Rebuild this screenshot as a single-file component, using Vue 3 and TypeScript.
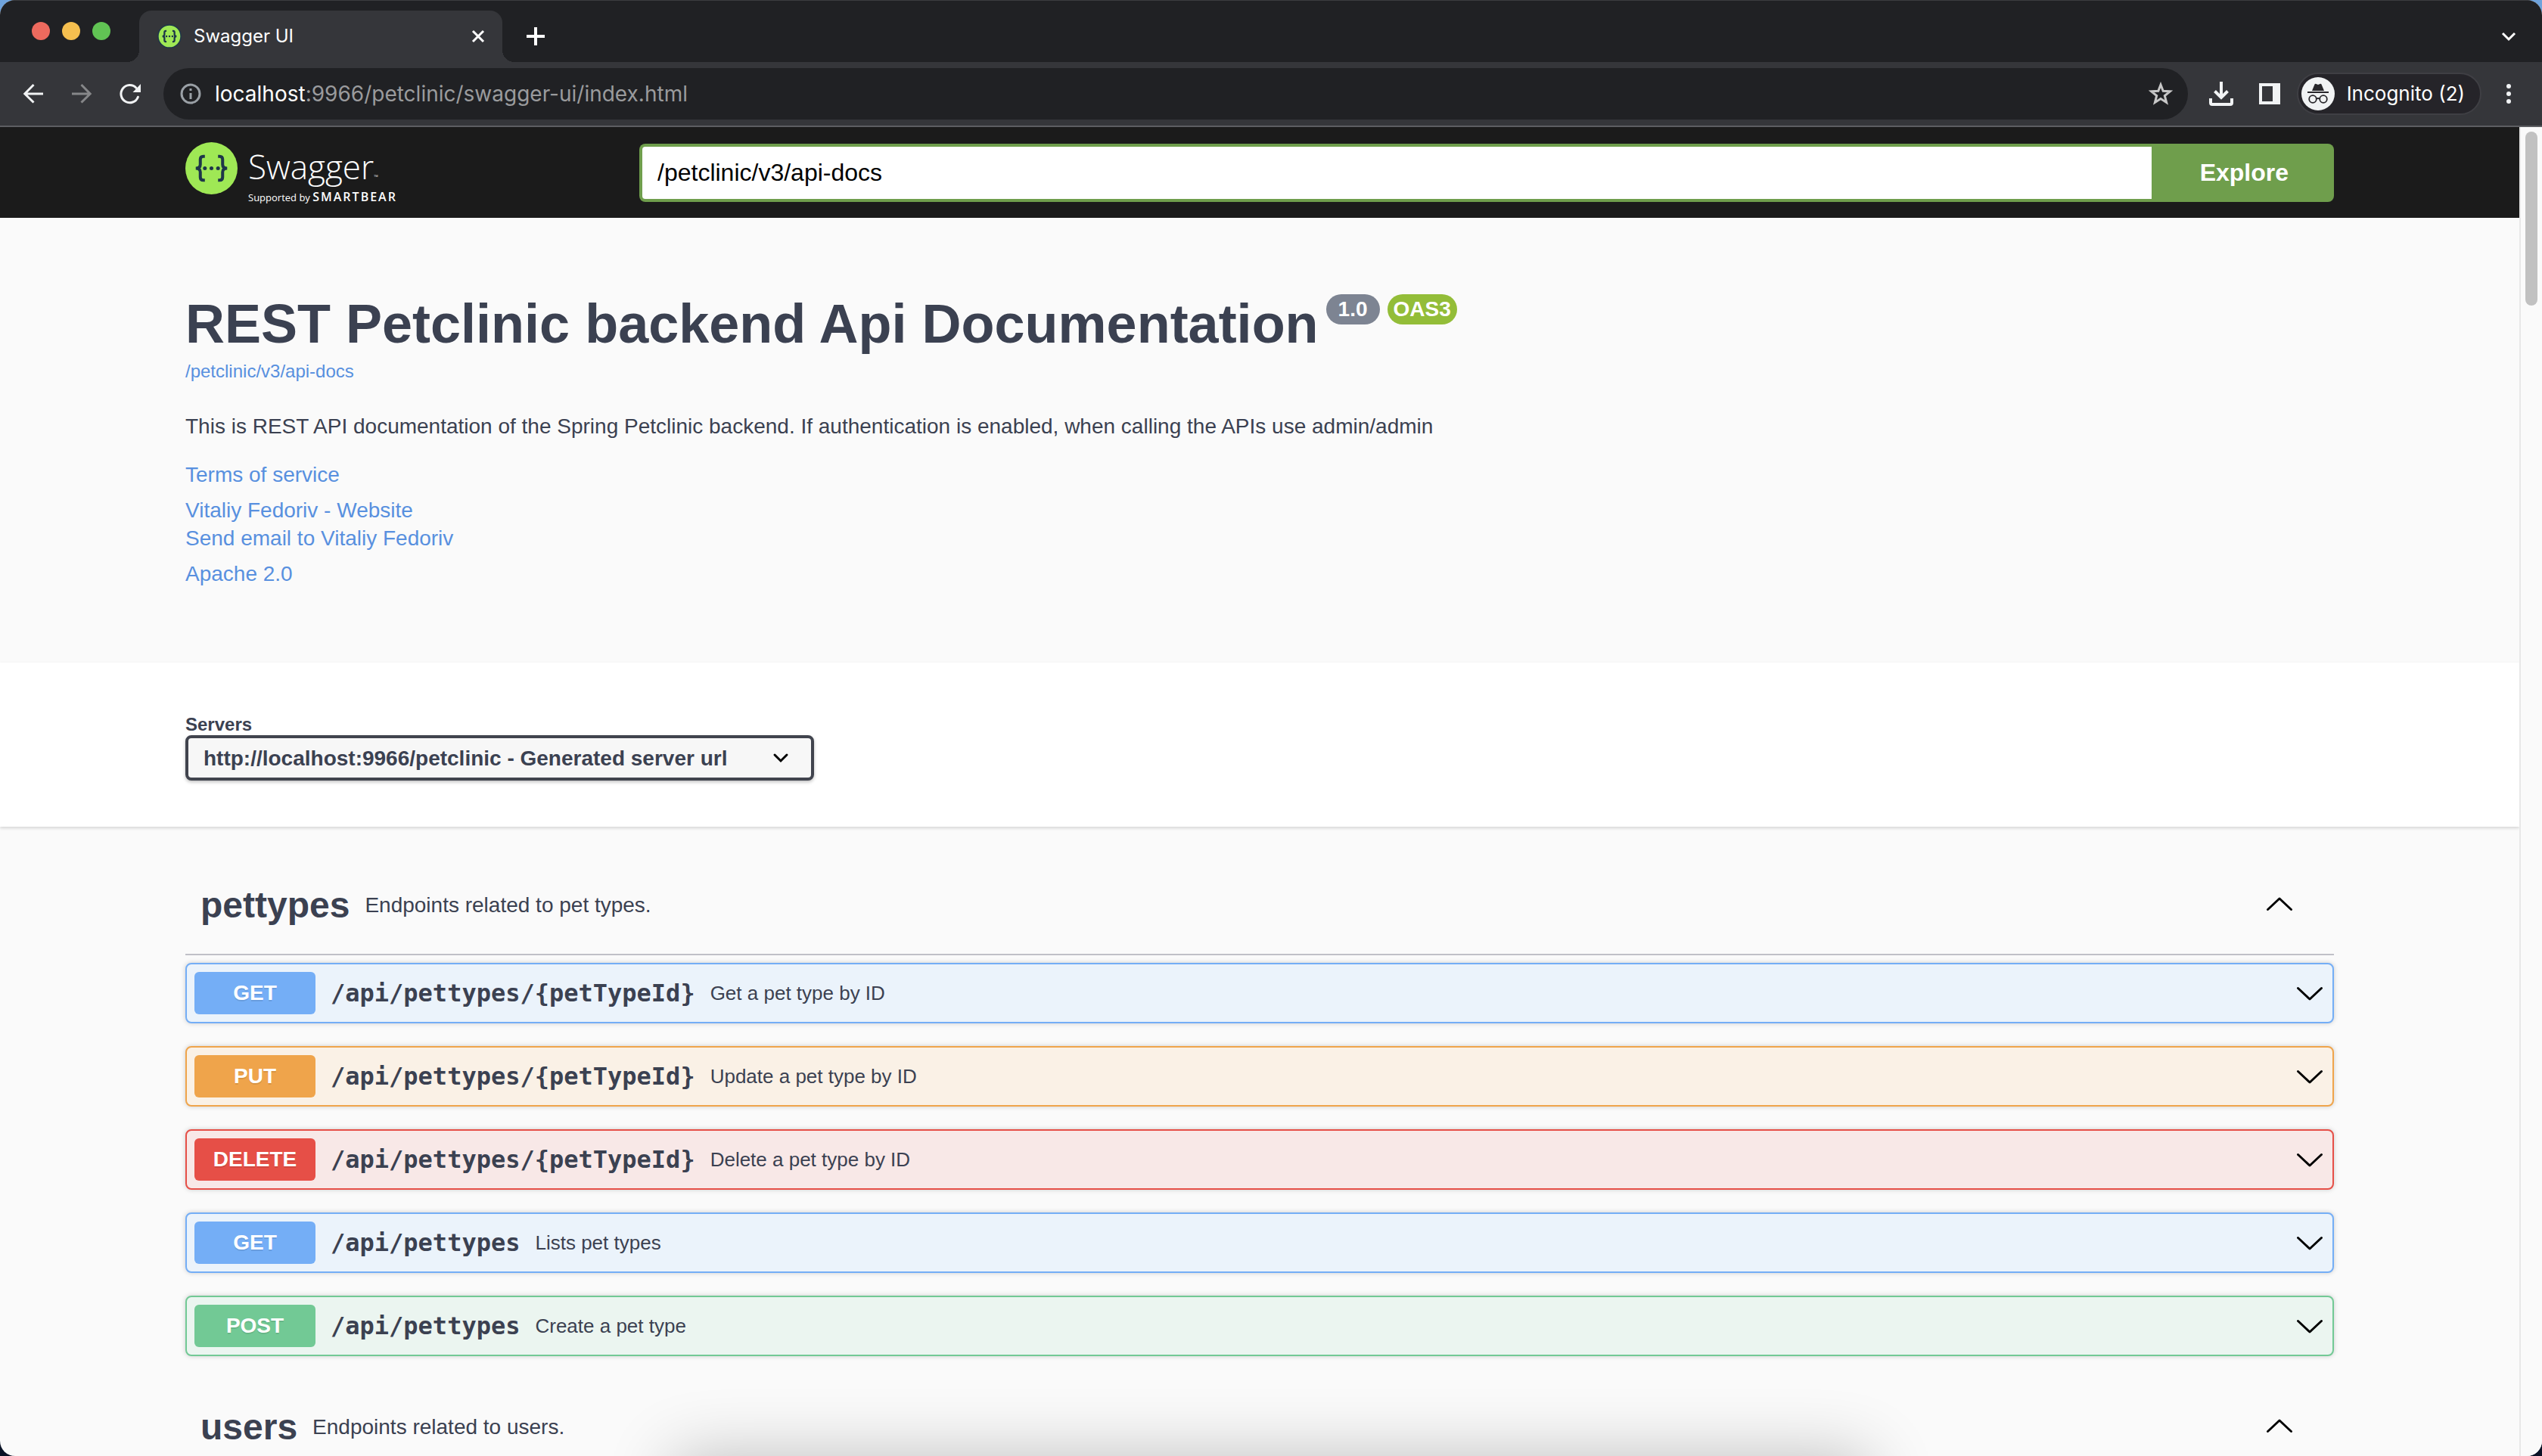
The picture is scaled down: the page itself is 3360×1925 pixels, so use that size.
<script setup lang="ts">
import { ref } from 'vue'

type Method = 'get' | 'put' | 'delete' | 'post'

interface Operation {
  method: Method
  path: string
  summary: string
}

interface Tag {
  name: string
  description: string
  operations: Operation[]
}

const specUrl = ref('/petclinic/v3/api-docs')
const serverLabel = 'http://localhost:9966/petclinic - Generated server url'
const server = ref(serverLabel)

const tags: Tag[] = [
  {
    name: 'pettypes',
    description: 'Endpoints related to pet types.',
    operations: [
      { method: 'get', path: '/api/pettypes/{petTypeId}', summary: 'Get a pet type by ID' },
      { method: 'put', path: '/api/pettypes/{petTypeId}', summary: 'Update a pet type by ID' },
      { method: 'delete', path: '/api/pettypes/{petTypeId}', summary: 'Delete a pet type by ID' },
      { method: 'get', path: '/api/pettypes', summary: 'Lists pet types' },
      { method: 'post', path: '/api/pettypes', summary: 'Create a pet type' },
    ],
  },
  { name: 'users', description: 'Endpoints related to users.', operations: [] },
]
</script>

<template>
  <div class="window">
    <div class="tabstrip">
      <div class="lights">
        <button class="light red" aria-label="Close window"></button>
        <button class="light yellow" aria-label="Minimize window"></button>
        <button class="light green" aria-label="Zoom window"></button>
      </div>
      <div class="tab">
        <svg class="favicon" viewBox="42 51 212 212" aria-hidden="true">
          <circle cx="148" cy="157" r="100" fill="#9fe855" stroke="#1d3649" stroke-width="10" />
          <g fill="none" stroke="#1d3649" stroke-width="15">
            <path d="M122 110H116Q104 110 104 122V142Q104 157 86 157Q104 157 104 172V192Q104 204 116 204H122" />
            <path d="M174 110H180Q192 110 192 122V142Q192 157 210 157Q192 157 192 172V192Q192 204 180 204H174" />
          </g>
          <g fill="#1d3649">
            <circle cx="122" cy="157" r="8" />
            <circle cx="148" cy="157" r="8" />
            <circle cx="174" cy="157" r="8" />
          </g>
        </svg>
        <span class="tab-title">Swagger UI</span>
        <button class="icon-btn small" aria-label="Close tab">
          <svg viewBox="0 0 24 24" width="24" height="24"><path d="M5 5L19 19M19 5L5 19" stroke="#fff" stroke-width="3" /></svg>
        </button>
      </div>
      <button class="icon-btn" aria-label="New tab">
        <svg viewBox="0 0 32 32" width="32" height="32"><path d="M16 4V28M4 16H28" stroke="#fff" stroke-width="4" /></svg>
      </button>
      <button class="icon-btn tab-search" aria-label="Search tabs">
        <svg viewBox="0 0 32 32" width="32" height="32"><path d="M8 12L16 20L24 12" fill="none" stroke="#fff" stroke-width="3" /></svg>
      </button>
    </div>

    <div class="toolbar">
      <div class="nav-buttons">
        <button class="icon-btn" aria-label="Back">
          <svg viewBox="0 0 32 32" width="32" height="32"><path d="M29 16H5M16.500 4L4.800 16L16.500 27.500" fill="none" stroke="#f1f3f4" stroke-width="3" /></svg>
        </button>
        <button class="icon-btn" aria-label="Forward">
          <svg viewBox="0 0 32 32" width="32" height="32"><path d="M3 16H27M15.500 4L27.200 16L15.500 27.500" fill="none" stroke="#868789" stroke-width="3" /></svg>
        </button>
        <button class="icon-btn" aria-label="Reload">
          <svg viewBox="0 0 32 32" width="32" height="32">
            <path d="M24 8.200A11.600 11.600 0 1 0 26.400 20.200" fill="none" stroke="#f1f3f4" stroke-width="3" stroke-linecap="round" />
            <path d="M30 3V14H19.500Z" fill="#f1f3f4" />
          </svg>
        </button>
      </div>
      <div class="omnibox">
        <svg viewBox="0 0 32 32" width="32" height="32" aria-hidden="true">
          <circle cx="16" cy="16" r="12" fill="none" stroke="#9aa0a6" stroke-width="3" />
          <path d="M16 15V23M16 9V12" stroke="#9aa0a6" stroke-width="3" />
        </svg>
        <span class="url"><b>localhost</b>:9966/petclinic/swagger-ui/index.html</span>
        <button class="icon-btn" aria-label="Bookmark this tab">
          <svg viewBox="0 0 32 32" width="32" height="32"><path d="M16 4L19.200 12.200L28.300 12.800L21.300 18.600L23.600 27.400L16 22.500L8.400 27.400L10.700 18.600L3.700 12.800L12.800 12.200Z" fill="none" stroke="#c7c7c7" stroke-width="3" /></svg>
        </button>
      </div>
      <div class="tools">
        <button class="icon-btn" aria-label="Downloads">
          <svg viewBox="0 0 32 32" width="32" height="32">
            <path d="M16 0V20M7.500 12.500L16 21L24.500 12.500" fill="none" stroke="#f1f3f4" stroke-width="4" />
            <path d="M2 22V28Q2 30 4 30H28Q30 30 30 28V22" fill="none" stroke="#f1f3f4" stroke-width="4" />
          </svg>
        </button>
        <button class="icon-btn" aria-label="Side panel">
          <svg viewBox="0 0 28 28" width="28" height="28"><path d="M0 0H28V28H0ZM4 4V24H18V4Z" fill="#f1f3f4" fill-rule="evenodd" /></svg>
        </button>
      </div>
      <button class="profile">
        <svg viewBox="0 0 44 44" width="44" height="44" aria-hidden="true">
          <circle cx="22" cy="22" r="22" fill="#f1f3f4" />
          <path d="M14 18L17.500 9.500Q18 8.500 19.500 9L22 10L24.500 9Q26 8.500 26.500 9.500L30 18Z" fill="#28272b" />
          <path d="M8 20H36" stroke="#28272b" stroke-width="2" />
          <g fill="none" stroke="#28272b" stroke-width="1.800">
            <circle cx="15" cy="29" r="4.800" />
            <circle cx="29" cy="29" r="4.800" />
            <path d="M19.800 28.500Q22 27.500 24.200 28.500" />
          </g>
        </svg>
        <span>Incognito (2)</span>
      </button>
      <button class="icon-btn" aria-label="Browser menu">
        <svg viewBox="0 0 32 32" width="32" height="32" fill="#f1f3f4">
          <circle cx="16" cy="6" r="3" /><circle cx="16" cy="16" r="3" /><circle cx="16" cy="26" r="3" />
        </svg>
      </button>
    </div>

    <div class="viewport">
      <main class="page">
        <header class="topbar">
          <div class="wrapper topbar-row">
            <a class="brand" href="#">
              <svg viewBox="45 54 206 206" width="69" height="69" aria-hidden="true">
                <circle cx="148" cy="157" r="103" fill="#9fe855" />
                <g fill="none" stroke="#1d3649" stroke-width="12">
                  <path d="M122 110H116Q104 110 104 122V142Q104 157 86 157Q104 157 104 172V192Q104 204 116 204H122" />
                  <path d="M174 110H180Q192 110 192 122V142Q192 157 210 157Q192 157 192 172V192Q192 204 180 204H174" />
                </g>
                <g fill="#1d3649">
                  <circle cx="122" cy="157" r="7.500" />
                  <circle cx="148" cy="157" r="7.500" />
                  <circle cx="174" cy="157" r="7.500" />
                </g>
              </svg>
              <span class="brand-text">
                <span class="brand-name">Swagger<small>™</small></span>
                <span class="brand-by">Supported by <b>SMARTBEAR</b></span>
              </span>
            </a>
            <form class="spec-form" @submit.prevent>
              <input v-model="specUrl" type="text" aria-label="API definition URL" />
              <button type="submit">Explore</button>
            </form>
          </div>
        </header>

        <section class="info wrapper">
          <div class="title-row">
            <h1>REST Petclinic backend Api Documentation</h1>
            <span class="badge version">1.0</span>
            <span class="badge oas">OAS3</span>
          </div>
          <a class="spec-link" href="#">/petclinic/v3/api-docs</a>
          <p>This is REST API documentation of the Spring Petclinic backend. If authentication is enabled, when calling the APIs use admin/admin</p>
          <div class="links">
            <div><a href="#">Terms of service</a></div>
            <div>
              <a href="#">Vitaliy Fedoriv - Website</a>
              <a href="#">Send email to Vitaliy Fedoriv</a>
            </div>
            <div><a href="#">Apache 2.0</a></div>
          </div>
        </section>

        <section class="schemes">
          <div class="wrapper">
            <label for="servers">Servers</label>
            <div class="select-box">
              <select id="servers" v-model="server">
                <option :value="serverLabel">{{ serverLabel }}</option>
              </select>
              <svg viewBox="0 0 40 40" width="40" height="40" aria-hidden="true"><path d="M12 16L20 24L28 16" fill="none" stroke="#000" stroke-width="3" stroke-linecap="round" /></svg>
            </div>
          </div>
        </section>

        <div class="tags wrapper">
          <section v-for="tag in tags" :key="tag.name">
            <div class="tag-head">
              <h3>{{ tag.name }}</h3>
              <p>{{ tag.description }}</p>
              <button class="arrow" :aria-label="'Collapse ' + tag.name">
                <svg viewBox="0 0 40 40" width="40" height="40"><path d="M4.500 25.500L20 11L35.500 25.500" fill="none" stroke="#000" stroke-width="3" stroke-linecap="round" stroke-linejoin="round" /></svg>
              </button>
            </div>
            <div class="operations">
              <div v-for="op in tag.operations" :key="op.method + op.path" class="op" :class="op.method">
                <button class="method">{{ op.method.toUpperCase() }}</button>
                <a class="path" href="#">{{ op.path }}</a>
                <span class="summary">{{ op.summary }}</span>
                <button class="arrow" :aria-label="'Expand ' + op.summary">
                  <svg viewBox="0 0 40 40" width="40" height="40"><path d="M4.500 13.500L20 28L35.500 13.500" fill="none" stroke="#000" stroke-width="3" stroke-linecap="round" stroke-linejoin="round" /></svg>
                </button>
              </div>
            </div>
          </section>
        </div>
      </main>
      <div class="scrollbar"><div class="thumb"></div></div>
    </div>
    <div class="dock-shadow"></div>
  </div>
</template>

<style>
body {
  background: linear-gradient(#6fa3dc 50%, #0a1226 50%);
}
</style>

<style scoped>
* {
  box-sizing: border-box;
  margin: 0;
}

button {
  border: 0;
  padding: 0;
  background: none;
  font: inherit;
  color: inherit;
}

svg {
  display: block;
  flex: none;
}

a {
  text-decoration: none;
}

.window {
  position: relative;
  display: flex;
  flex-direction: column;
  height: 100vh;
  overflow: hidden;
  border-radius: 20px;
  background: #fafafa;
  color: #3b4151;
  font-family: "Liberation Sans", Arial, sans-serif;
}

.tabstrip {
  display: flex;
  height: 82px;
  padding: 14px 20px 0 42px;
  background: #202124;
  box-shadow: inset 0 1px #3c3d40;
  font-family: Inter, Roboto, sans-serif;
  color: #fff;
}

.lights {
  display: flex;
  gap: 16px;
  width: 142px;
  padding-top: 15px;
}

.light {
  width: 24px;
  height: 24px;
  border-radius: 50%;
}

.red { background: #ed6a5e; }
.yellow { background: #f5bf4f; }
.green { background: #61c454; }

.tab {
  position: relative;
  display: flex;
  align-items: center;
  width: 480px;
  padding: 0 16px 0 24px;
  border-radius: 16px 16px 0 0;
  background: #35363a;
}

.tab::before,
.tab::after {
  content: "";
  position: absolute;
  bottom: 0;
  width: 16px;
  height: 16px;
}

.tab::before {
  right: 100%;
  background: radial-gradient(circle at 0 0, #202124 16px, #35363a 16px);
}

.tab::after {
  left: 100%;
  background: radial-gradient(circle at 100% 0, #202124 16px, #35363a 16px);
}

.favicon {
  width: 32px;
  height: 32px;
  margin-right: 16px;
}

.tab-title {
  flex: 1;
  font-size: 24px;
  line-height: 32px;
}

.icon-btn {
  display: flex;
  flex: none;
  align-items: center;
  justify-content: center;
  width: 48px;
  height: 68px;
}

.icon-btn.small {
  width: 32px;
}

.tabstrip > .icon-btn {
  margin-left: 20px;
}

.tabstrip > .tab-search {
  margin-left: auto;
}

.toolbar {
  display: flex;
  align-items: center;
  height: 86px;
  padding: 0 20px;
  border-bottom: 2px solid #5d5e62;
  background: #35363a;
  font-family: Inter, Roboto, sans-serif;
}

.nav-buttons,
.tools {
  display: flex;
  gap: 16px;
}

.omnibox {
  display: flex;
  flex: 1;
  align-items: center;
  height: 68px;
  margin: 0 20px;
  padding: 0 12px 0 20px;
  border-radius: 34px;
  background: #202124;
}

.url {
  flex: 1;
  margin-left: 16px;
  font-size: 28px;
  line-height: 36px;
  color: #9a9b9d;
}

.url b {
  font-weight: 400;
  color: #fff;
}

.profile {
  display: flex;
  align-items: center;
  gap: 16px;
  height: 56px;
  margin: 0 12px;
  padding: 0 20px 0 4px;
  border: 2px solid #3f3f44;
  border-radius: 28px;
  background: #252429;
  font-size: 26px;
  line-height: 32px;
  color: #fff;
}

.viewport {
  display: flex;
  flex: 1;
  min-height: 0;
  overflow: hidden;
}

.page {
  flex: 1;
  min-width: 0;
}

.scrollbar {
  width: 30px;
  padding: 6px;
  border-left: 2px solid #e8e8e8;
  background: #fafafa;
}

.thumb {
  width: 16px;
  height: 230px;
  border-radius: 8px;
  background: #c1c1c1;
}

.wrapper {
  max-width: 2920px;
  margin: 0 auto;
  padding: 0 40px;
}

.topbar {
  background: #1b1b1b;
}

.topbar-row {
  display: flex;
  height: 120px;
}

.brand {
  display: flex;
  width: 600px;
  padding-top: 20px;
  color: #fff;
  font-family: "Open Sans", "Noto Sans", sans-serif;
}

.brand-text {
  display: flex;
  flex-direction: column;
  margin-left: 14px;
}

.brand-name {
  font-size: 44px;
  font-weight: 300;
  line-height: 64px;
}

.brand-name small {
  font-size: 8px;
  line-height: 8px;
}

.brand-by {
  font-size: 13px;
  line-height: 16px;
}

.brand-by b {
  font-size: 16px;
  font-weight: 600;
  letter-spacing: 2px;
}

.spec-form {
  display: flex;
  flex: 1;
  height: 77px;
  margin-top: 22px;
}

.spec-form input {
  flex: 1;
  min-width: 0;
  padding: 0 20px;
  border: 4px solid #6f9e4c;
  border-right: 0;
  border-radius: 8px 0 0 8px;
  background: #fff;
  color: #000;
  font: 32px "Liberation Sans", Arial, sans-serif;
}

.spec-form button {
  padding: 0 60px 0 64px;
  border-radius: 0 8px 8px 0;
  background: #6f9e4c;
  color: #fff;
  font-size: 32px;
  font-weight: 700;
}

.info {
  padding-top: 99px;
  padding-bottom: 99px;
}

.title-row {
  display: flex;
  gap: 10px;
}

h1 {
  font-size: 72px;
  line-height: 82px;
}

.badge {
  height: 40px;
  margin-top: 2px;
  border-radius: 20px;
  color: #fff;
  font-size: 28px;
  font-weight: 700;
  line-height: 40px;
}

.version {
  padding: 0 16px;
  background: #7d8492;
}

.oas {
  padding: 0 8px;
  background: #93bd38;
}

.info a {
  display: block;
  width: fit-content;
  color: #5890df;
}

.spec-link {
  margin-top: 8px;
  font-size: 24px;
  line-height: 28px;
}

.info p {
  margin: 40px 0 27px;
  font-size: 28px;
  line-height: 37px;
}

.links {
  display: flex;
  flex-direction: column;
  gap: 10px;
  font-size: 28px;
  line-height: 37px;
}

.schemes {
  padding: 67px 0 61px;
  background: #fff;
  box-shadow: 0 2px 4px rgba(0, 0, 0, 0.15);
}

.schemes label {
  display: block;
  font-size: 24px;
  font-weight: 700;
  line-height: 29px;
}

.select-box {
  position: relative;
  width: 831px;
}

.select-box select {
  display: block;
  width: 100%;
  height: 60px;
  padding: 0 80px 0 20px;
  border: 4px solid #41444e;
  border-radius: 8px;
  background: #f7f7f7;
  box-shadow: 0 2px 4px rgba(0, 0, 0, 0.25);
  color: #3b4151;
  font: 700 28px "Liberation Sans", Arial, sans-serif;
  appearance: none;
}

.select-box svg {
  position: absolute;
  top: 10px;
  right: 24px;
  pointer-events: none;
}

.tags {
  padding-top: 40px;
}

.tag-head {
  display: flex;
  align-items: center;
  gap: 20px;
  padding: 36px 52px 36px 20px;
  border-bottom: 2px solid #c0c0c7;
}

h3 {
  font-size: 48px;
  line-height: 56px;
}

.tag-head p {
  font-size: 28px;
  line-height: 32px;
}

.arrow {
  margin-left: auto;
}

.operations {
  padding-top: 10px;
}

.op {
  display: flex;
  align-items: center;
  gap: 20px;
  height: 80px;
  margin-bottom: 30px;
  padding: 0 10px;
  border: 2px solid;
  border-radius: 8px;
  box-shadow: 0 0 6px rgba(0, 0, 0, 0.19);
}

.method {
  width: 160px;
  height: 56px;
  border-radius: 6px;
  color: #fff;
  font-size: 28px;
  font-weight: 700;
  text-shadow: 0 2px rgba(0, 0, 0, 0.1);
}

.path {
  color: #3b4151;
  font: 700 32px "DejaVu Sans Mono", monospace;
}

.summary {
  font-size: 26px;
}

.get { border-color: #74aef6; background: #ebf3fb; }
.get .method { background: #74aef6; }
.put { border-color: #efa44b; background: #faf1e6; }
.put .method { background: #efa44b; }
.delete { border-color: #e64f47; background: #f8e8e7; }
.delete .method { background: #e64f47; }
.post { border-color: #72c995; background: #ebf5f0; }
.post .method { background: #72c995; }

/* Soft shadow cast upward by the dock that sits below the window */
.dock-shadow {
  position: absolute;
  top: 100%;
  right: 0;
  left: 0;
  width: 47%;
  height: 200px;
  margin: 0 auto;
  box-shadow: 0 0 88px rgba(0, 0, 0, 0.24);
  pointer-events: none;
}
</style>
